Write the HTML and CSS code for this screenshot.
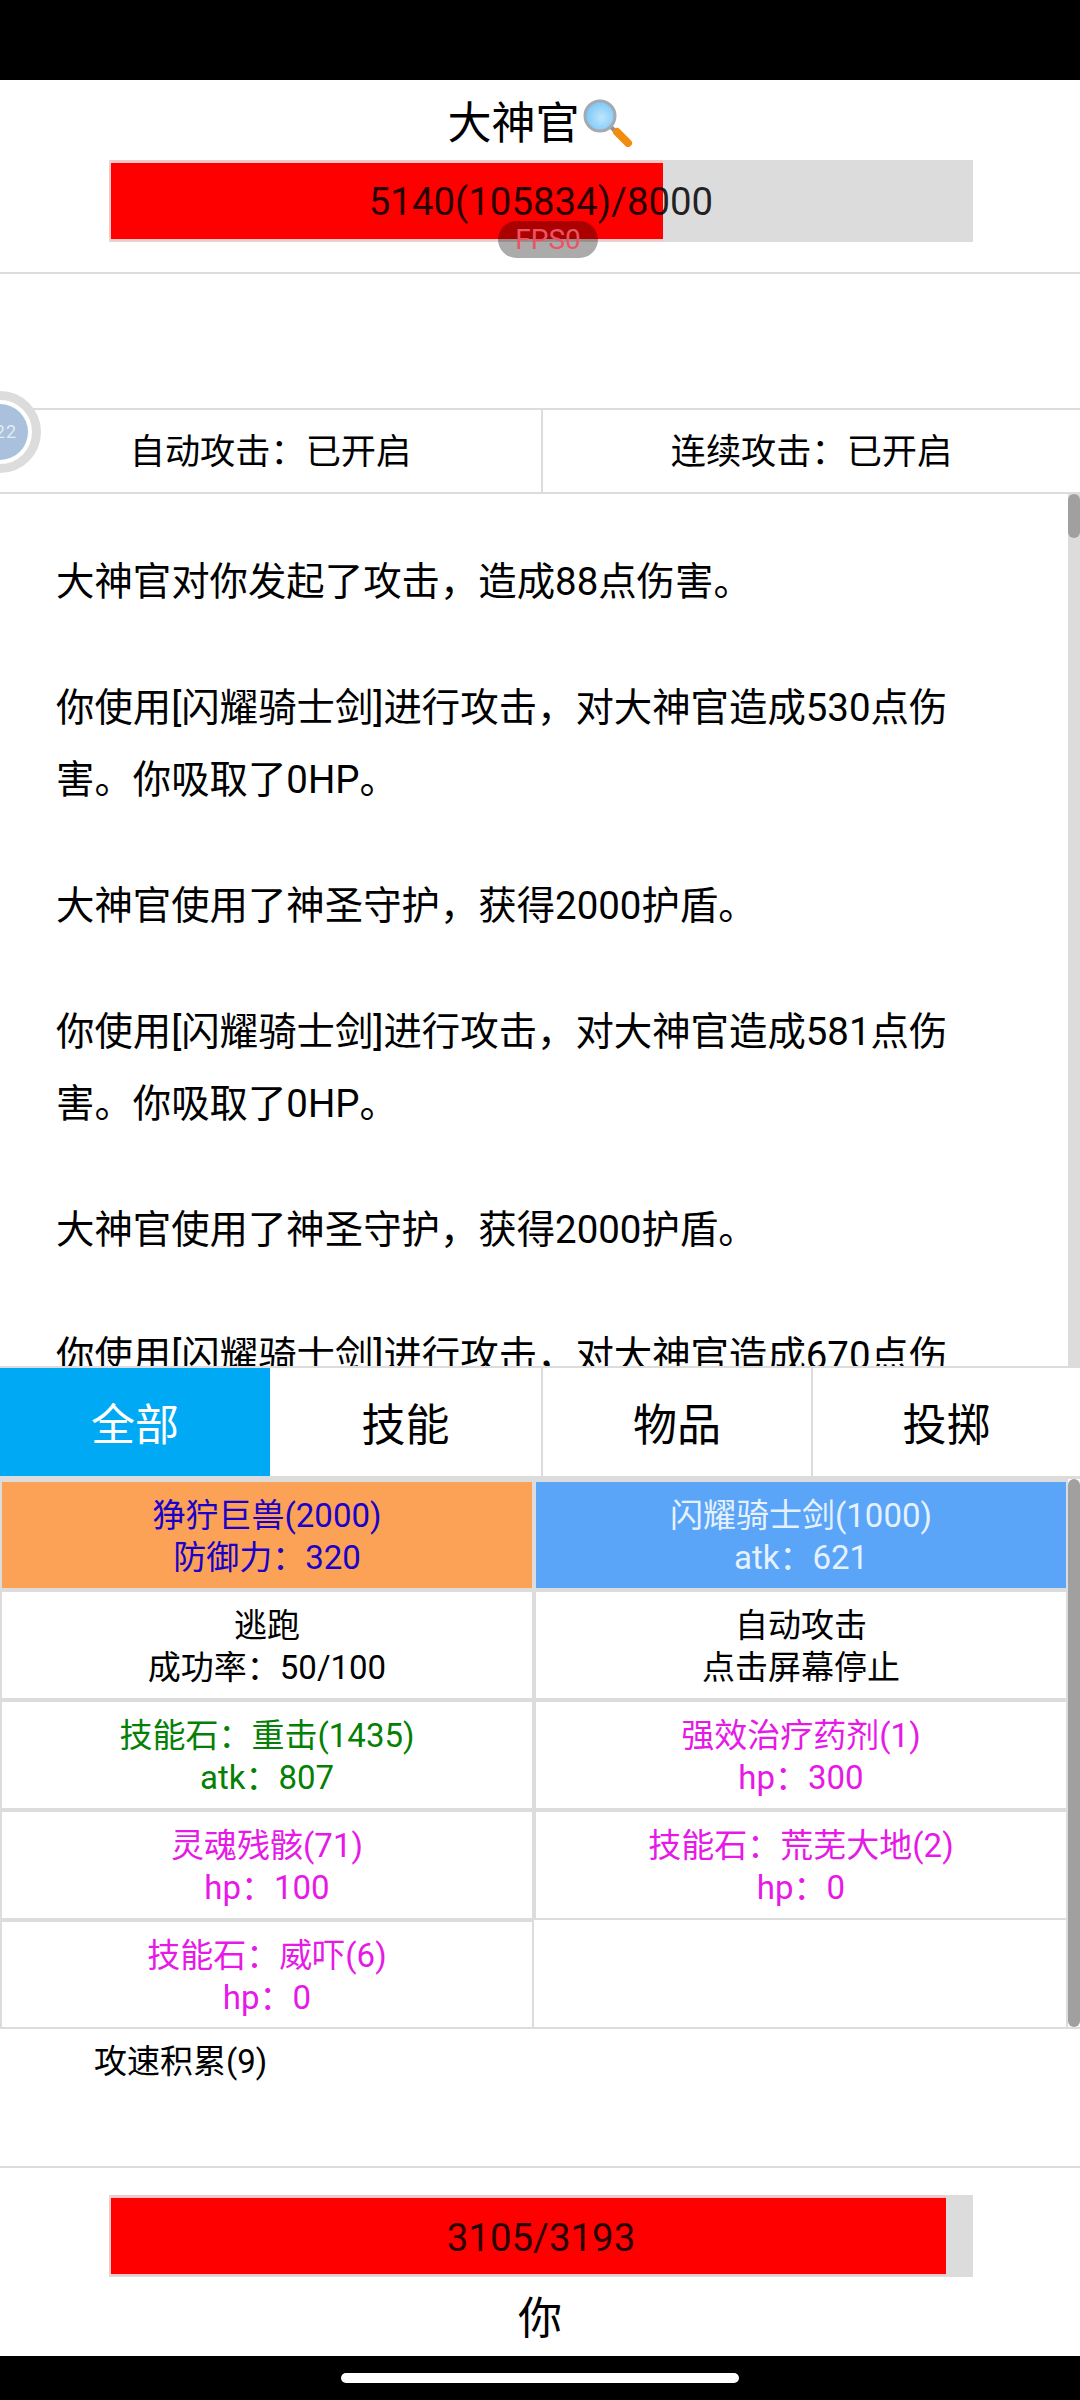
FILE: index.html
```html
<!DOCTYPE html>
<html lang="zh-CN">

<head>
    <meta charset="UTF-8">
    <meta name="viewport" content="width=device-width, initial-scale=1.0">
    <title>大神官</title>
    <link rel="stylesheet" href="styles.css">
</head>

<body>
    <div class="statusbar"></div>

    <div class="enemy">
        <div class="enemy-name">
            <span>大神官</span>
            <svg class="zoom-icon" viewBox="0 0 50 48" width="50" height="48">
                <defs>
                    <radialGradient id="lens" cx="0.55" cy="0.55" r="0.6">
                        <stop offset="0" stop-color="#bfe6fd"/>
                        <stop offset="1" stop-color="#74c4f7"/>
                    </radialGradient>
                </defs>
                <line x1="28" y1="28" x2="33" y2="33" stroke="#8a9298" stroke-width="4"/>
                <line x1="34" y1="33" x2="45" y2="44" stroke="#f28c0f" stroke-width="8" stroke-linecap="round"/>
                <circle cx="17" cy="17" r="15" fill="url(#lens)" stroke="#a3aab0" stroke-width="3"/>
            </svg>
        </div>
        <div class="bar">
            <div class="bar-fill enemy-fill"></div>
            <div class="bar-text">5140(105834)/8000</div>
        </div>
        <div class="fps">FPS0</div>
    </div>

    <div class="blank"></div>

    <div class="float-btn">
        <span>22</span>
    </div>

    <div class="toggles">
        <div class="toggle">自动攻击&#xFF1A;已开启</div>
        <div class="toggle">连续攻击&#xFF1A;已开启</div>
    </div>

    <div class="log">
        <p>大神官对你发起了攻击&#xFF0C;造成88点伤害。</p>
        <p>你使用[闪耀骑士剑]进行攻击&#xFF0C;对大神官造成530点伤害。你吸取了0HP。</p>
        <p>大神官使用了神圣守护&#xFF0C;获得2000护盾。</p>
        <p>你使用[闪耀骑士剑]进行攻击&#xFF0C;对大神官造成581点伤害。你吸取了0HP。</p>
        <p>大神官使用了神圣守护&#xFF0C;获得2000护盾。</p>
        <p>你使用[闪耀骑士剑]进行攻击&#xFF0C;对大神官造成670点伤害。你吸取了0HP。</p>
        <div class="log-track"><div class="log-thumb"></div></div>
    </div>

    <div class="tabs">
        <div class="tab tab-on">全部</div>
        <div class="tab">技能</div>
        <div class="tab">物品</div>
        <div class="tab">投掷</div>
    </div>

    <div class="actions">
        <div class="grid">
            <div class="cell cell-orange"><div>狰狞巨兽(2000)</div><div>防御力&#xFF1A;320</div></div>
            <div class="cell cell-blue"><div>闪耀骑士剑(1000)</div><div>atk&#xFF1A;621</div></div>
            <div class="cell"><div>逃跑</div><div>成功率&#xFF1A;50/100</div></div>
            <div class="cell"><div>自动攻击</div><div>点击屏幕停止</div></div>
            <div class="cell green"><div>技能石&#xFF1A;重击(1435)</div><div>atk&#xFF1A;807</div></div>
            <div class="cell pink"><div>强效治疗药剂(1)</div><div>hp&#xFF1A;300</div></div>
            <div class="cell pink"><div>灵魂残骸(71)</div><div>hp&#xFF1A;100</div></div>
            <div class="cell pink"><div>技能石&#xFF1A;荒芜大地(2)</div><div>hp&#xFF1A;0</div></div>
            <div class="cell pink cell-last"><div>技能石&#xFF1A;威吓(6)</div><div>hp&#xFF1A;0</div></div>
            <div class="cell cell-empty"></div>
        </div>
        <div class="actions-thumb"></div>
    </div>

    <div class="buffs">攻速积累(9)</div>

    <div class="player">
        <div class="bar">
            <div class="bar-fill player-fill"></div>
            <div class="bar-text player-text">3105/3193</div>
        </div>
        <div class="player-name">你</div>
    </div>

    <div class="navbar">
        <div class="home"></div>
    </div>
</body>

</html>
```

FILE: styles.css
```css
* {
    box-sizing: border-box;
}

body {
    margin: 0;
    width: 1080px;
    height: 2400px;
    overflow: hidden;
    position: relative;
    background-color: white;
    color: black;
    font-family: Roboto, "Noto Sans CJK SC", sans-serif;
}

.statusbar {
    height: 80px;
    background-color: black;
}

.enemy {
    height: 194px;
    position: relative;
    border-bottom: 2px solid #dcdcdc;
}

.enemy-name {
    height: 80px;
    display: flex;
    justify-content: center;
    align-items: center;
    font-size: 44px;
}

.zoom-icon {
    margin: 6px 0 0 3px;
}

.bar {
    position: relative;
    width: 864px;
    height: 82px;
    margin-left: 109px;
    padding: 3px 2px;
    background-color: #dcdcdc;
}

.bar-fill {
    height: 100%;
    background-color: #ff0000;
    box-shadow: 0 -3px 0 #f2c8c8, 0 2px 0 #f2c8c8, -2px 0 0 #f2c8c8;
}

.enemy-fill {
    width: 552px;
}

.player-fill {
    width: 835px;
}

.bar-text {
    position: absolute;
    top: 0;
    left: 0;
    right: 0;
    bottom: 0;
    display: flex;
    justify-content: center;
    align-items: center;
    font-size: 38.4px;
    color: rgba(0, 0, 0, 0.85);
}

.player-text {
    padding-top: 2px;
}

.fps {
    position: absolute;
    left: 498px;
    top: 141px;
    width: 100px;
    height: 37px;
    border-radius: 19px;
    background-color: rgba(0, 0, 0, 0.33);
    color: #ea5565;
    font-size: 28px;
    text-align: center;
    line-height: 38px;
}

.blank {
    height: 134px;
}

.float-btn {
    position: absolute;
    left: -41px;
    top: 391px;
    width: 82px;
    height: 82px;
    border-radius: 50%;
    border: 9px solid #dcdcdc;
    background-color: white;
    display: flex;
    justify-content: center;
    align-items: center;
}

.float-btn span {
    width: 56px;
    height: 56px;
    flex: none;
    border-radius: 50%;
    background-color: #a9c1dc;
    color: #e4ebf3;
    font-size: 18px;
    letter-spacing: 1px;
    line-height: 56px;
    text-align: right;
    padding-right: 11px;
}

.toggles {
    height: 86px;
    display: flex;
    border-top: 2px solid #dcdcdc;
    border-bottom: 2px solid #dcdcdc;
}

.toggle {
    width: 543px;
    display: flex;
    justify-content: center;
    align-items: center;
    font-size: 35.2px;
    padding-bottom: 5px;
    border-right: 2px solid #dcdcdc;
}

.toggle:last-child {
    width: 537px;
    border-right: none;
}

.log {
    height: 874px;
    position: relative;
    overflow: hidden;
    padding: 52px 80px 0 56px;
    font-size: 38.4px;
    line-height: 72px;
    border-bottom: 2px solid #dcdcdc;
}

.log p {
    margin: 0 0 54px 0;
}

.log-track {
    position: absolute;
    right: 0;
    top: 0;
    bottom: 0;
    width: 12px;
    background-color: #dcdcdc;
}

.log-thumb {
    width: 12px;
    height: 44px;
    border-radius: 6px;
    background-color: #a0a0a0;
}

.tabs {
    height: 111px;
    display: grid;
    grid-template-columns: 270px 273px 270px 267px;
    border-bottom: 3px solid #dcdcdc;
}

.tab {
    display: flex;
    justify-content: center;
    align-items: center;
    font-size: 44px;
    border-right: 2px solid #dcdcdc;
}

.tab:last-child {
    border-right: none;
}

.tab-on {
    background-color: #00a9f4;
    color: white;
    border-right: none;
}

.actions {
    position: relative;
    height: 550px;
    border-bottom: 2px solid #dcdcdc;
}

.grid {
    width: 1068px;
    height: 100%;
    display: grid;
    grid-template-columns: 534px 534px;
    grid-template-rows: 110px 110px 110px 110px 105px;
    background-color: #dcdcdc;
    padding-top: 3px;
}

.cell {
    background-color: white;
    margin: 0 2px 4px 2px;
    padding-top: 4px;
    display: flex;
    flex-direction: column;
    justify-content: center;
    align-items: center;
    font-size: 33px;
    line-height: 42px;
}

.cell-last {
    margin-bottom: 0;
}

.cell-empty {
    margin: -2px 2px 0 0;
}

.cell-orange {
    background-color: #fba257;
    color: #1a00c8;
}

.cell-blue {
    background-color: #5aa5f7;
    color: #e6f1ff;
}

.green {
    color: #058005;
}

.pink {
    color: #e619e6;
}

.actions-thumb {
    position: absolute;
    right: 0;
    top: 0;
    width: 12px;
    height: 100%;
    border-radius: 6px;
    background-color: #a0a0a0;
}

.buffs {
    height: 139px;
    padding: 12px 0 0 94px;
    font-size: 33px;
    line-height: 42px;
    border-bottom: 2px solid #dcdcdc;
}

.player {
    height: 188px;
    padding-top: 27px;
}

.player-name {
    height: 76px;
    display: flex;
    justify-content: center;
    align-items: center;
    font-size: 44px;
}

.navbar {
    height: 44px;
    background-color: black;
    display: flex;
    justify-content: center;
    padding-top: 17px;
}

.home {
    width: 398px;
    height: 10px;
    border-radius: 5px;
    background-color: white;
}
```
